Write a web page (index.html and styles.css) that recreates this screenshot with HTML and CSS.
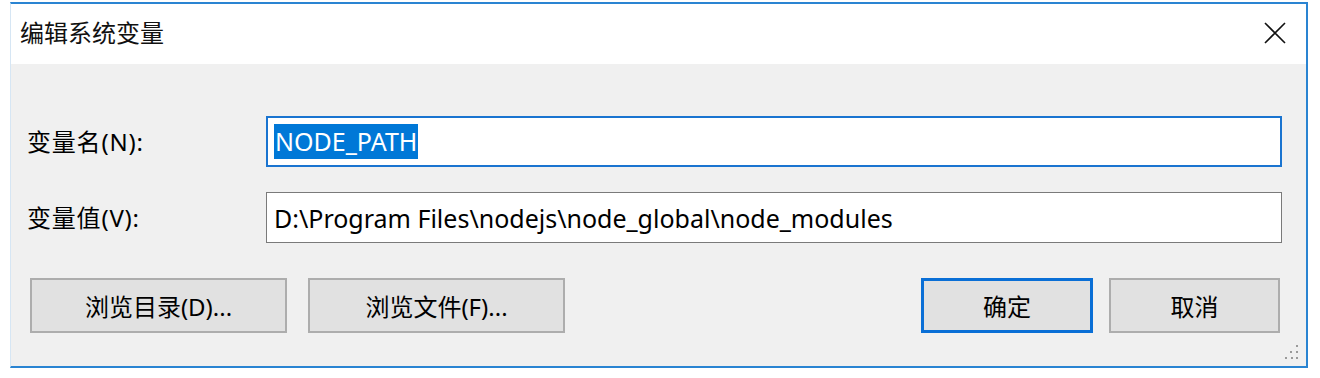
FILE: index.html
```html
<html>
<head>
	<title>编辑系统变量</title>
	<link rel="stylesheet" href="styles.css">
</head>
<body>

  <div class="window">
    <div class="titlebar">
      <span class="title">编辑系统变量</span>
      <span class="close">
        <svg width="22" height="22" viewBox="0 0 22 22"><path d="M1 1 L21 21 M21 1 L1 21" stroke="#111" stroke-width="1.6" fill="none"/></svg>
      </span>
    </div>

    <div class="content">
      <div class="fields">
        <label class="label">变量名(N):</label>
        <div class="input focused"><span class="selected">NODE_PATH</span></div>

        <label class="label">变量值(V):</label>
        <div class="input">D:\Program Files\nodejs\node_global\node_modules</div>
      </div>

      <div class="buttons">
        <div class="left-group">
          <div class="btn wide">浏览目录(D)...</div>
          <div class="btn wide">浏览文件(F)...</div>
        </div>
        <div class="right-group">
          <div class="btn default">确定</div>
          <div class="btn">取消</div>
        </div>
      </div>

      <div class="grip">
        <svg width="14" height="16" viewBox="0 0 14 16">
          <rect x="11" y="0" width="2" height="2" fill="#9a9a9a"/>
          <rect x="5" y="6" width="2" height="2" fill="#9a9a9a"/>
          <rect x="11" y="6" width="2" height="2" fill="#9a9a9a"/>
          <rect x="0" y="12" width="2" height="2" fill="#9a9a9a"/>
          <rect x="6" y="12" width="2" height="2" fill="#9a9a9a"/>
          <rect x="11" y="12" width="2" height="2" fill="#9a9a9a"/>
        </svg>
      </div>
    </div>
  </div>

</body>
</html>
```

FILE: styles.css
```css
body {
	padding: 0;
	margin: 0;
	background-color: #fff;
	font-family: "Noto Sans", "Noto Sans CJK SC", sans-serif;
	color: #000;
}
.window {
	margin: 2px 0 0 10px;
	width: 1295px;
	border: 2px solid #2a84d2;
	border-left: 1px solid #d6e6f4;
}
.titlebar {
	height: 60px;
	background-color: #fff;
	display: flex;
	align-items: center;
	justify-content: space-between;
	padding: 0 20px 6px 9px;
	box-sizing: border-box;
}
.title {
	font-size: 24px;
	font-family: "Noto Sans CJK SC", sans-serif;
	color: #111;
}
.close {
	display: flex;
	padding-top: 4px;
}
.content {
	background-color: #f0f0f0;
	padding: 52px 24px 0 16px;
	height: 250px;
	position: relative;
}
.fields {
	display: grid;
	grid-template-columns: 239px 1fr;
	row-gap: 25px;
	align-items: center;
}
.label {
	font-size: 24px;
	letter-spacing: 0.8px;
	padding-bottom: 3px;
}
.input {
	height: 49px;
	border: 1px solid #7a7a7a;
	background-color: #fff;
	font-size: 25px;
	padding: 0 7px;
	display: flex;
	align-items: center;
}
.input.focused {
	border: 2px solid #1a74d0;
	height: 47px;
	padding: 0 6px;
}
.selected {
	background-color: #0078d7;
	color: #fff;
	padding: 0 1px;
	line-height: 35px;
}
.buttons {
	display: flex;
	justify-content: space-between;
	margin-top: 35px;
	padding: 0 2px 0 3px;
}
.left-group, .right-group {
	display: flex;
}
.left-group {
	gap: 21px;
}
.right-group {
	gap: 16px;
}
.btn {
	width: 167px;
	height: 51px;
	border: 2px solid #adadad;
	background-color: #e1e1e1;
	font-size: 24px;
	display: flex;
	align-items: center;
	justify-content: center;
}
.btn.wide {
	width: 253px;
}
.btn.default {
	border: 3px solid #0a6fd6;
	height: 49px;
	width: 166px;
}
.grip {
	position: absolute;
	right: 7px;
	bottom: 5px;
	display: flex;
}
```
